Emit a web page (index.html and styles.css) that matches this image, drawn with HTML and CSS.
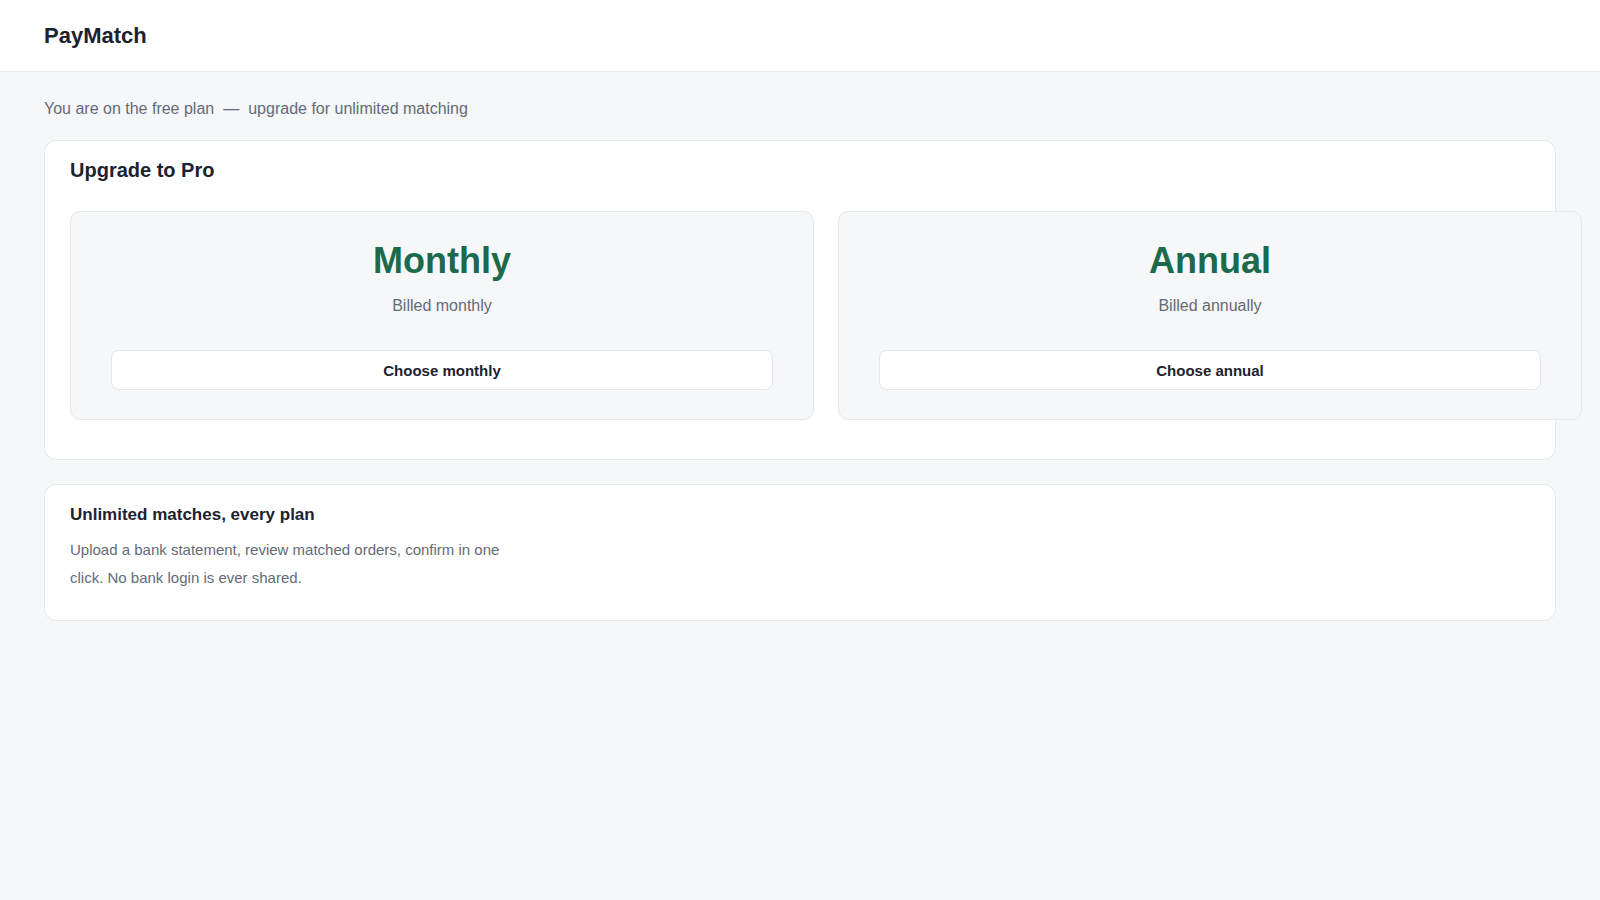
FILE: index.html
```html
<!DOCTYPE html>
<html lang="en">
<head>
    <meta charset="UTF-8">
    <meta name="viewport" content="width=device-width, initial-scale=1.0">
    <title>PayMatch - Upgrade</title>
    <link rel="stylesheet" href="styles.css">
</head>
<body>
    <header class="topbar">
        <div class="brand">PayMatch</div>
    </header>

    <main class="page">
        <p class="plan-note">You are on the free plan<span class="dash">—</span>upgrade for unlimited matching</p>

        <section class="panel upgrade">
            <h2 class="panel-title">Upgrade to Pro</h2>
            <div class="plans">
                <div class="plan">
                    <div class="plan-name">Monthly</div>
                    <div class="plan-billing">Billed monthly</div>
                    <button class="plan-btn">Choose monthly</button>
                </div>
                <div class="plan">
                    <div class="plan-name">Annual</div>
                    <div class="plan-billing">Billed annually</div>
                    <button class="plan-btn">Choose annual</button>
                </div>
            </div>
        </section>

        <section class="panel info">
            <h3 class="info-title">Unlimited matches, every plan</h3>
            <p class="info-text">Upload a bank statement, review matched orders, confirm in one click. No bank login is ever shared.</p>
        </section>
    </main>
</body>
</html>
```

FILE: styles.css
```css
body {
    margin: 0;
    font-family: "Liberation Sans", Arial, sans-serif;
    background: #f6f7f9;
    color: #1b2230;
}
.topbar {
    height: 71px;
    padding: 0 44px;
    display: flex;
    align-items: center;
    background: white;
    border-bottom: 1px solid #e4e7eb;
}
.brand {
    font-size: 22px;
    font-weight: 700;
    color: #1b2230;
}
.page {
    padding: 28px 44px;
}
.plan-note {
    margin: 0 0 22px;
    font-size: 16px;
    color: #636b78;
}
.plan-note .dash {
    margin: 0 9px;
}
.panel {
    background: white;
    border: 1px solid #e4e7eb;
    border-radius: 12px;
}
.upgrade {
    padding: 18px 25px 39px;
    margin-bottom: 24px;
}
.panel-title {
    margin: 0 0 29px;
    font-size: 20px;
    font-weight: 700;
    line-height: 23px;
}
.plans {
    display: grid;
    grid-template-columns: repeat(2, minmax(744px, 1fr));
    gap: 24px;
}
.plan {
    background: #f6f7f9;
    border: 1px solid #e4e7eb;
    border-radius: 10px;
    padding: 29px 40px;
    text-align: center;
}
.plan-name {
    font-size: 36px;
    font-weight: 700;
    line-height: 40px;
    color: #1c6a4a;
}
.plan-billing {
    margin-top: 16px;
    font-size: 16px;
    color: #636b78;
}
.plan-btn {
    display: block;
    width: 100%;
    height: 40px;
    margin-top: 35px;
    background: white;
    border: 1px solid #e4e7eb;
    border-radius: 8px;
    font-family: inherit;
    font-size: 15px;
    font-weight: 700;
    color: #1b2230;
    cursor: pointer;
}
.info {
    padding: 20px 25px 28px;
}
.info-title {
    margin: 0 0 11px;
    font-size: 17px;
    font-weight: 700;
}
.info-text {
    margin: 0;
    max-width: 440px;
    font-size: 15px;
    line-height: 28px;
    color: #636b78;
}
```
